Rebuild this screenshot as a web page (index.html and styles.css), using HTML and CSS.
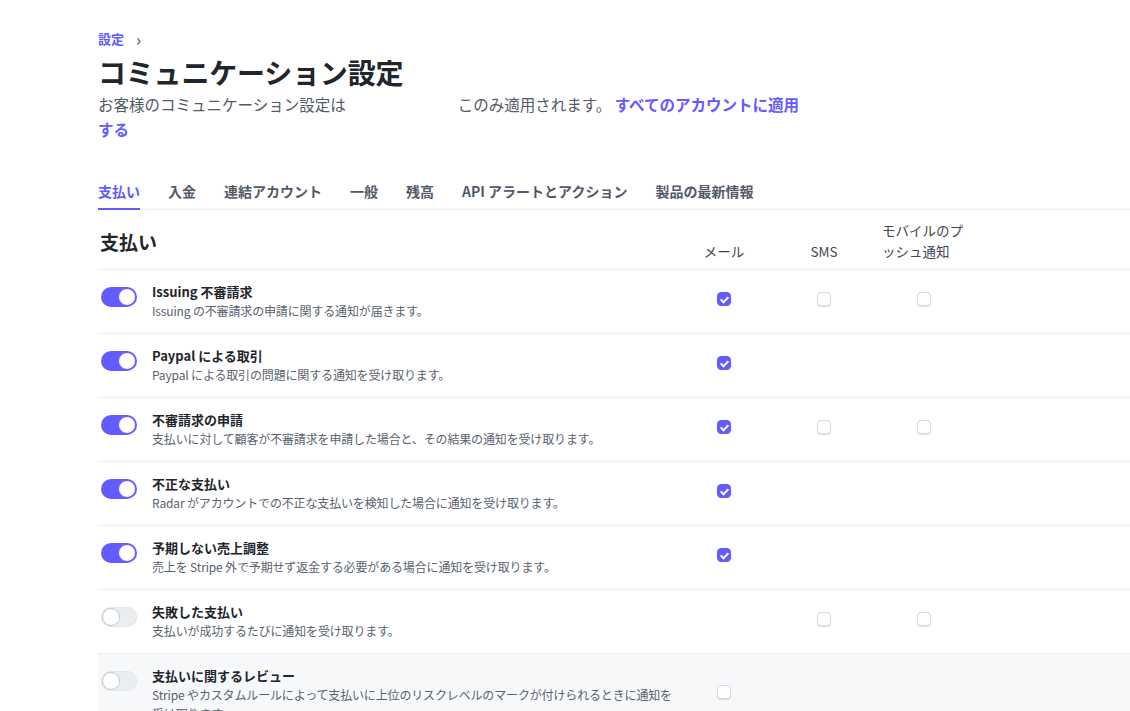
FILE: index.html
```html
<!DOCTYPE html>
<html lang="ja">
<head>
<meta charset="utf-8">
<link rel="stylesheet" href="styles.css">
</head>
<body>
<div class="page">
  <div class="crumbs"><a class="crumb">設定</a><span class="chev">›</span></div>
  <h1 class="title">コミュニケーション設定</h1>
  <p class="subtitle">お客様のコミュニケーション設定は<span class="blank"></span>このみ適用されます。 <a class="link">すべてのアカウントに適用する</a></p>

  <nav class="tabs">
    <span class="tab active">支払い</span>
    <span class="tab">入金</span>
    <span class="tab">連結アカウント</span>
    <span class="tab">一般</span>
    <span class="tab">残高</span>
    <span class="tab">API アラートとアクション</span>
    <span class="tab">製品の最新情報</span>
  </nav>

  <div class="table">
    <div class="head">
      <div class="section">支払い</div>
      <div class="col hc">メール</div>
      <div class="col hc">SMS</div>
      <div class="col hp">モバイルのプッシュ通知</div>
    </div>

    <div class="row">
      <span class="toggle on"></span>
      <div class="text"><div class="name">Issuing 不審請求</div><div class="desc">Issuing の不審請求の申請に関する通知が届きます。</div></div>
      <div class="col"><span class="cb checked"></span></div>
      <div class="col"><span class="cb"></span></div>
      <div class="col"><span class="cb"></span></div>
    </div>

    <div class="row">
      <span class="toggle on"></span>
      <div class="text"><div class="name">Paypal による取引</div><div class="desc">Paypal による取引の問題に関する通知を受け取ります。</div></div>
      <div class="col"><span class="cb checked"></span></div>
      <div class="col"></div>
      <div class="col"></div>
    </div>

    <div class="row">
      <span class="toggle on"></span>
      <div class="text"><div class="name">不審請求の申請</div><div class="desc">支払いに対して顧客が不審請求を申請した場合と、その結果の通知を受け取ります。</div></div>
      <div class="col"><span class="cb checked"></span></div>
      <div class="col"><span class="cb"></span></div>
      <div class="col"><span class="cb"></span></div>
    </div>

    <div class="row">
      <span class="toggle on"></span>
      <div class="text"><div class="name">不正な支払い</div><div class="desc">Radar がアカウントでの不正な支払いを検知した場合に通知を受け取ります。</div></div>
      <div class="col"><span class="cb checked"></span></div>
      <div class="col"></div>
      <div class="col"></div>
    </div>

    <div class="row">
      <span class="toggle on"></span>
      <div class="text"><div class="name">予期しない売上調整</div><div class="desc">売上を Stripe 外で予期せず返金する必要がある場合に通知を受け取ります。</div></div>
      <div class="col"><span class="cb checked"></span></div>
      <div class="col"></div>
      <div class="col"></div>
    </div>

    <div class="row">
      <span class="toggle"></span>
      <div class="text"><div class="name">失敗した支払い</div><div class="desc">支払いが成功するたびに通知を受け取ります。</div></div>
      <div class="col"></div>
      <div class="col"><span class="cb"></span></div>
      <div class="col"><span class="cb"></span></div>
    </div>

    <div class="row shaded">
      <span class="toggle"></span>
      <div class="text"><div class="name">支払いに関するレビュー</div><div class="desc">Stripe やカスタムルールによって支払いに上位のリスクレベルのマークが付けられるときに通知を受け取ります。</div></div>
      <div class="col"><span class="cb"></span></div>
      <div class="col"></div>
      <div class="col"></div>
    </div>
  </div>
</div>
</body>
</html>
```

FILE: styles.css
```css
html, body {
  margin: 0;
  padding: 0;
  background: #ffffff;
  font-family: "Noto Sans CJK JP", "Noto Sans", sans-serif;
  color: #353a44;
  overflow: hidden;
}

.page {
  padding: 29px 0 0 98px;
  width: 1100px;
}

.crumbs {
  display: flex;
  align-items: center;
  gap: 12px;
  height: 20px;
  font-size: 13px;
  line-height: 20px;
}

.crumb {
  color: #635bff;
  font-weight: 700;
}

.chev {
  color: #687385;
  font-size: 16px;
  font-weight: 700;
}

.title {
  margin: 5px 0 0;
  font-size: 28px;
  line-height: 36px;
  font-weight: 700;
  color: #21252c;
  letter-spacing: -0.2px;
}

.subtitle {
  margin: 2px 0 0;
  width: 712px;
  font-size: 15.5px;
  line-height: 25px;
  color: #545969;
}

.blank {
  display: inline-block;
  width: 112px;
  height: 10px;
}

.link {
  color: #635bff;
  font-weight: 700;
}

.tabs {
  display: flex;
  gap: 28px;
  margin-top: 37px;
  border-bottom: 1px solid #ebeef1;
}

.tab {
  font-size: 14px;
  line-height: 20px;
  font-weight: 700;
  color: #545969;
  padding: 2px 0 7px;
  border-bottom: 2px solid transparent;
  margin-bottom: -1px;
}

.tab.active {
  color: #635bff;
  border-bottom-color: #635bff;
}

.head {
  display: flex;
  height: 59px;
  border-bottom: 1px solid #ebeef1;
}

.section {
  width: 576px;
  flex: none;
  align-self: center;
  padding: 4px 0 0 2px;
  box-sizing: border-box;
  font-size: 19px;
  line-height: 26px;
  font-weight: 700;
  color: #21252c;
}

.col {
  width: 100px;
  flex: none;
  display: flex;
  align-items: center;
  justify-content: center;
}

.head .col {
  font-size: 13.5px;
  line-height: 21px;
  color: #414552;
  align-items: flex-end;
  padding-bottom: 7px;
  box-sizing: border-box;
}

.head .hp {
  justify-content: flex-start;
  padding-left: 8px;
  padding-right: 4px;
}

.row {
  display: flex;
  align-items: center;
  padding: 12px 0 13px;
  border-bottom: 1px solid #ebeef1;
}

.row.shaded {
  background: #f6f8fa;
}

.toggle {
  align-self: flex-start;
  flex: none;
  position: relative;
  width: 36px;
  height: 20px;
  margin: 5px 15px 0 3px;
  border-radius: 10px;
  background: #ebeef1;
  box-shadow: inset 0 0 0 1px #e3e6ea;
}

.toggle::after {
  content: "";
  position: absolute;
  top: 1px;
  left: 1px;
  width: 16px;
  height: 16px;
  border-radius: 50%;
  background: #ffffff;
  border: 1px solid #c0c8d2;
}

.toggle.on {
  background: #635bff;
  box-shadow: none;
}

.toggle.on::after {
  left: 17px;
  border-color: #635bff;
}

.text {
  flex: none;
  width: 522px;
  box-sizing: border-box;
  padding-right: 1px;
}

.name {
  font-size: 13px;
  line-height: 19px;
  font-weight: 700;
  color: #21252c;
}

.desc {
  font-size: 12px;
  line-height: 19px;
  letter-spacing: -0.15px;
  color: #596171;
}

.row .col {
  height: 20px;
  margin-top: -4px;
}

.row.shaded .col {
  margin-top: -6px;
}

.cb {
  width: 14px;
  height: 14px;
  box-sizing: border-box;
  border-radius: 4px;
  background: #ffffff;
  border: 1px solid #d5dbe1;
  box-shadow: 0 1px 1px rgba(0, 0, 0, 0.12);
  position: relative;
}

.cb.checked {
  background: #635bff;
  border-color: #635bff;
  box-shadow: none;
}

.cb.checked::after {
  content: "";
  position: absolute;
  left: 3.5px;
  top: 1.5px;
  width: 3px;
  height: 6px;
  border: solid #ffffff;
  border-width: 0 2px 2px 0;
  transform: rotate(45deg);
}
```
